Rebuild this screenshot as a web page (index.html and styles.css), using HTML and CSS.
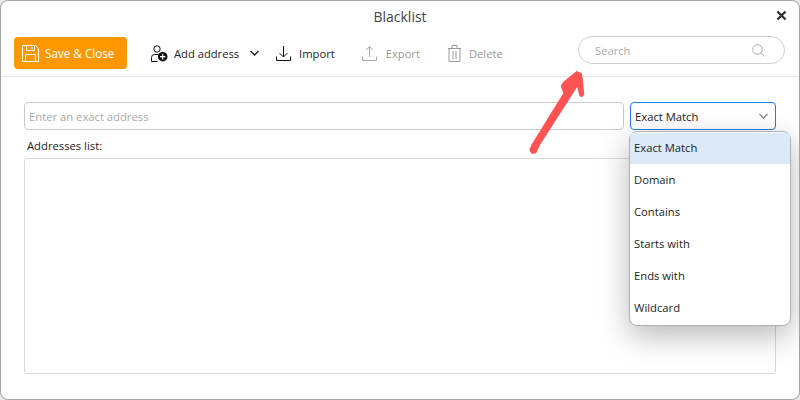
FILE: index.html
```html
<!DOCTYPE html>
<html lang="en">
<head>
<meta charset="utf-8">
<title>Blacklist</title>
<link rel="stylesheet" href="styles.css">
</head>
<body>
<div class="window">
  <header class="header">
    <div class="title">Blacklist</div>
    <button class="close" aria-label="Close">
      <svg width="11" height="11" viewBox="0 0 11 11"><path d="M1.5 1.5l8 8M9.5 1.5l-8 8" stroke="#333" stroke-width="2.4" fill="none"/></svg>
    </button>
    <div class="toolbar">
      <button class="save">
        <svg width="17" height="17" viewBox="0 0 17 17" fill="none" stroke="#fff" stroke-width="1"><path d="M.5.5h13l3 3v13H.5z"/><path d="M4.500.5v5h8v-5M10 2v2M3.500 16.500v-7h10v7"/></svg>
        <span>Save &amp; Close</span>
      </button>
      <button class="tool add">
        <svg width="17" height="17" viewBox="0 0 17 17" fill="none" stroke="#111" stroke-width="1"><circle cx="6" cy="4" r="3.200"/><path d="M.5 16.500v-4q0-3 3-3h4M.5 16.500h6"/><circle cx="11.700" cy="11.700" r="4.800" fill="#111" stroke="none"/><path d="M11.700 9v5.400M9 11.700h5.400" stroke="#fff" stroke-width="1.200"/></svg>
        <span>Add address</span>
        <svg class="caret" width="9" height="6" viewBox="0 0 9 6" fill="none" stroke="#222" stroke-width="1.500"><path d="M.5 1l4 4 4-4"/></svg>
      </button>
      <button class="tool import">
        <svg width="15" height="15" viewBox="0 0 15 15" fill="none" stroke="#111" stroke-width="1"><path d="M7.500 0v10.500M3.500 7l4 4 4-4M.5 10.500v4h14v-4"/></svg>
        <span>Import</span>
      </button>
      <button class="tool muted export">
        <svg width="15" height="15" viewBox="0 0 15 15" fill="none" stroke="#aaa" stroke-width="1"><path d="M7.500 11V.7M4 4.200L7.500.7 11 4.200M.5 10.500v4h14v-4"/></svg>
        <span>Export</span>
      </button>
      <button class="tool muted delete">
        <svg width="13" height="17" viewBox="0 0 13 17" fill="none" stroke="#999" stroke-width="1"><path d="M0 3.500h13M4 3.500v-3h5v3M1 3.500v13h11v-13M5 6v8M8 6v8"/></svg>
        <span>Delete</span>
      </button>
      <div class="search">
        <span>Search</span>
        <svg width="13" height="13" viewBox="0 0 13 13" fill="none" stroke="#aaa" stroke-width="1"><circle cx="5.500" cy="5.500" r="4.800"/><path d="M9 9l3.500 3.500"/></svg>
      </div>
    </div>
  </header>
  <main class="content">
    <div class="row">
      <div class="input">Enter an exact address</div>
      <div class="select">
        <span>Exact Match</span>
        <svg width="9" height="6" viewBox="0 0 9 6" fill="none" stroke="#888" stroke-width="1.300"><path d="M.5 1l4 4 4-4"/></svg>
      </div>
    </div>
    <div class="label">Addresses list:</div>
    <div class="list"></div>
  </main>
  <ul class="menu">
    <li class="item selected">Exact Match</li>
    <li class="item">Domain</li>
    <li class="item">Contains</li>
    <li class="item">Starts with</li>
    <li class="item">Ends with</li>
    <li class="item">Wildcard</li>
  </ul>
  <svg class="arrow" width="60" height="90" viewBox="0 0 60 90"><path d="M49.700 1L54.700 3.300L55.700 8.300L57.300 25L54.700 27.300L52.300 26L50.300 16.700L13 75L9 83.300L4.700 84L2.300 80L4.700 74.300L36.300 23.300L33.700 15.700L36.300 11.700Z" fill="#ff5252"/></svg>
</div>
</body>
</html>
```
FILE: styles.css
```css
* { box-sizing: border-box; }
html, body { margin: 0; padding: 0; }
body {
  width: 800px;
  height: 400px;
  background: #e8e8e8;
  overflow: hidden;
  font-family: "Open Sans", "Noto Sans", sans-serif;
  font-size: 11.25px;
  color: #222;
}
button {
  font: inherit;
  border: 0;
  background: none;
  padding: 0;
  color: inherit;
  display: flex;
  align-items: center;
}
.window {
  position: relative;
  width: 800px;
  height: 400px;
  background: #fff;
  border: 1px solid #a3a3a3;
  border-radius: 8px;
  display: flex;
  flex-direction: column;
  overflow: hidden;
}
.header {
  height: 76px;
  border-bottom: 1px solid #e6e6e6;
  flex: none;
}
.title {
  text-align: center;
  font-size: 14px;
  line-height: 20px;
  padding-top: 6px;
  height: 36px;
  color: #444;
}
.close {
  position: absolute;
  top: 9px;
  right: 12px;
}
.toolbar {
  display: flex;
  align-items: center;
  height: 32px;
  padding-left: 13px;
  font-size: 11.2px;
}
.save {
  width: 113px;
  height: 32px;
  background: #ff9800;
  color: #fff;
  border-radius: 4px;
  padding-left: 8px;
  gap: 6px;
  flex: none;
}
.save span { font-size: 11.7px; }
.tool { gap: 8px; color: #222; }
.add { margin-left: 24px; gap: 6px; }
.caret { margin-left: 5px; }
.import { margin-left: 17px; }
.export { margin-left: 27px; gap: 9px; }
.delete { margin-left: 28px; }
.muted { color: #999; }
.search {
  margin-left: auto;
  margin-right: 14px;
  margin-top: -2px;
  margin-bottom: 2px;
  width: 207px;
  height: 28px;
  border: 1px solid #cfcfcf;
  border-radius: 14px;
  display: flex;
  align-items: center;
  justify-content: space-between;
  padding: 0 19px 0 16px;
  color: #aaa;
  position: relative;
  top: -1px;
}
.content {
  padding: 25px 23px 25px;
  flex: 1;
  display: flex;
  flex-direction: column;
  min-height: 0;
}
.row { display: flex; gap: 6px; height: 28px; }
.input {
  flex: 1;
  border: 1px solid #c9c9c9;
  border-radius: 4px;
  padding-left: 4px;
  line-height: 28px;
  color: #aaa;
}
.select {
  width: 146px;
  border: 1px solid #1a7fe0;
  border-radius: 4px;
  padding: 0 7px 0 4px;
  display: flex;
  align-items: center;
  justify-content: space-between;
  color: #222;
}
.label {
  height: 28px;
  line-height: 31px;
  padding-left: 3px;
  color: #222;
}
.list {
  flex: 1;
  border: 1px solid #d9d9d9;
  border-radius: 3px;
}
.menu {
  position: absolute;
  top: 130px;
  left: 628px;
  width: 162px;
  margin: 0;
  padding: 1px 0;
  list-style: none;
  background: #fff;
  border: 1px solid #b0b0b0;
  border-radius: 8px;
  box-shadow: 0 10px 30px rgba(0, 0, 0, .28);
}
.item {
  height: 32px;
  line-height: 32px;
  padding-left: 4px;
  color: #222;
}
.selected { background: #dceaf8; height: 31px; line-height: 30px; }
.arrow {
  position: absolute;
  left: 526px;
  top: 69px;
}
```
